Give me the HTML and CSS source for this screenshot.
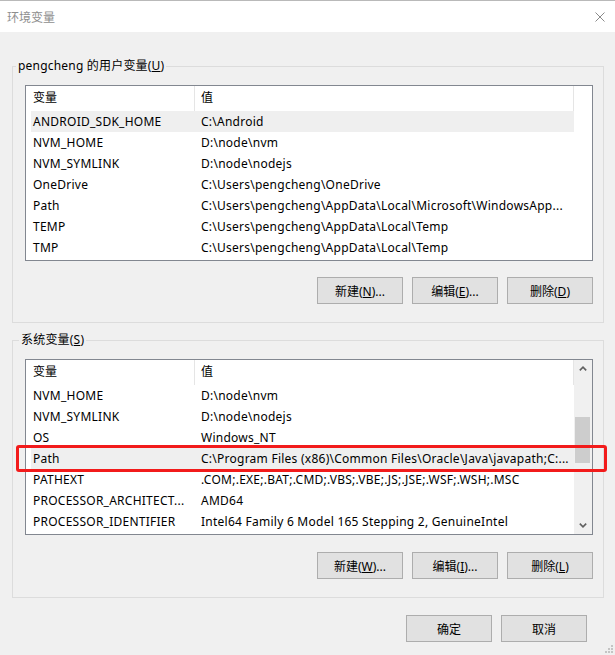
FILE: index.html
```html
<!DOCTYPE html>
<html lang="zh-CN">
<head>
    <meta charset="UTF-8">
    <title>环境变量</title>
    <link rel="stylesheet" href="styles.css">
</head>
<body>
    <div class="window">
        <div class="titlebar">
            <span class="title">环境变量</span>
            <svg class="close" width="10" height="10" viewBox="0 0 10 10">
                <path d="M0.5 0.5 L9.5 9.5 M9.5 0.5 L0.5 9.5" stroke="#8a8a8a" stroke-width="1" fill="none"/>
            </svg>
        </div>

        <fieldset class="group group-user">
            <legend>pengcheng 的用户变量(<u>U</u>)</legend>
            <div class="list">
                <div class="list-main">
                    <div class="list-head">
                        <div class="col-name">变量</div>
                        <div class="col-value">值</div>
                    </div>
                    <div class="row selected"><div class="col-name">ANDROID_SDK_HOME</div><div class="col-value">C:\Android</div></div>
                    <div class="row"><div class="col-name">NVM_HOME</div><div class="col-value">D:\node\nvm</div></div>
                    <div class="row"><div class="col-name">NVM_SYMLINK</div><div class="col-value">D:\node\nodejs</div></div>
                    <div class="row"><div class="col-name">OneDrive</div><div class="col-value">C:\Users\pengcheng\OneDrive</div></div>
                    <div class="row"><div class="col-name">Path</div><div class="col-value">C:\Users\pengcheng\AppData\Local\Microsoft\WindowsApp...</div></div>
                    <div class="row"><div class="col-name">TEMP</div><div class="col-value">C:\Users\pengcheng\AppData\Local\Temp</div></div>
                    <div class="row"><div class="col-name">TMP</div><div class="col-value">C:\Users\pengcheng\AppData\Local\Temp</div></div>
                </div>
                <div class="list-side"></div>
            </div>
            <div class="button-row">
                <button class="btn">新建(<u>N</u>)...</button>
                <button class="btn">编辑(<u>E</u>)...</button>
                <button class="btn">删除(<u>D</u>)</button>
            </div>
        </fieldset>

        <fieldset class="group group-system">
            <legend>系统变量(<u>S</u>)</legend>
            <div class="list">
                <div class="list-main">
                    <div class="list-head">
                        <div class="col-name">变量</div>
                        <div class="col-value">值</div>
                    </div>
                    <div class="row"><div class="col-name">NVM_HOME</div><div class="col-value">D:\node\nvm</div></div>
                    <div class="row"><div class="col-name">NVM_SYMLINK</div><div class="col-value">D:\node\nodejs</div></div>
                    <div class="row"><div class="col-name">OS</div><div class="col-value">Windows_NT</div></div>
                    <div class="row selected"><div class="col-name">Path</div><div class="col-value">C:\Program Files (x86)\Common Files\Oracle\Java\javapath;C:...</div></div>
                    <div class="row"><div class="col-name">PATHEXT</div><div class="col-value">.COM;.EXE;.BAT;.CMD;.VBS;.VBE;.JS;.JSE;.WSF;.WSH;.MSC</div></div>
                    <div class="row"><div class="col-name">PROCESSOR_ARCHITECT...</div><div class="col-value">AMD64</div></div>
                    <div class="row"><div class="col-name">PROCESSOR_IDENTIFIER</div><div class="col-value">Intel64 Family 6 Model 165 Stepping 2, GenuineIntel</div></div>
                </div>
                <div class="scrollbar">
                    <div class="scroll-arrow">
                        <svg width="8" height="5" viewBox="0 0 8 5"><path d="M0.8 4.4 L4 1.2 L7.2 4.4" stroke="#606060" stroke-width="1.6" fill="none"/></svg>
                    </div>
                    <div class="scroll-track">
                        <div class="scroll-thumb"></div>
                    </div>
                    <div class="scroll-arrow">
                        <svg width="8" height="5" viewBox="0 0 8 5"><path d="M0.8 0.6 L4 3.8 L7.2 0.6" stroke="#606060" stroke-width="1.6" fill="none"/></svg>
                    </div>
                </div>
            </div>
            <div class="button-row">
                <button class="btn">新建(<u>W</u>)...</button>
                <button class="btn">编辑(<u>I</u>)...</button>
                <button class="btn">删除(<u>L</u>)</button>
            </div>
        </fieldset>

        <div class="dialog-buttons">
            <button class="btn">确定</button>
            <button class="btn">取消</button>
        </div>

        <!-- 标注：选中的 Path 行 -->
        <div class="mark"></div>

        <svg class="grip" width="8" height="8" viewBox="0 0 8 8">
            <rect x="6" y="0" width="2" height="2" fill="#c4c4c4"/>
            <rect x="3" y="3" width="2" height="2" fill="#c4c4c4"/>
            <rect x="6" y="3" width="2" height="2" fill="#c4c4c4"/>
            <rect x="0" y="6" width="2" height="2" fill="#c4c4c4"/>
            <rect x="3" y="6" width="2" height="2" fill="#c4c4c4"/>
            <rect x="6" y="6" width="2" height="2" fill="#c4c4c4"/>
        </svg>
    </div>
</body>
</html>
```

FILE: styles.css
```css
* {
    box-sizing: border-box;
}
body {
    margin: 0;
    background: #f0f0f0;
    font-family: "Noto Sans", "Noto Sans CJK SC", sans-serif;
    font-size: 12px;
    color: #000;
}
.window {
    position: relative;
    width: 615px;
    height: 655px;
    overflow: hidden;
    background: #f0f0f0;
}
.titlebar {
    height: 32px;
    background: #fff;
    border-top: 1px solid #b9b9b9;
    display: flex;
    align-items: center;
    justify-content: space-between;
    padding: 0 10px 0 7px;
}
.title {
    color: #8e8e8e;
    font-size: 12px;
}

/* 分组框 */
.group {
    margin: 26px 11px 0 12px;
    padding: 11px 10px 18px 12px;
    border: 1px solid #dcdcdc;
    min-width: 0;
}
.group legend {
    padding: 0 2px;
    line-height: 16px;
    height: 16px;
    letter-spacing: 0.2px;
}
.group-user legend {
    margin-left: -9px;
}
.group-system {
    margin-top: 9px;
}
.group-system legend {
    margin-left: -6px;
}

/* 列表 */
.list {
    width: 568px;
    height: 176px;
    border: 1px solid #828790;
    background: #fff;
    display: flex;
}
.list-main {
    width: 548px;
}
.list-side {
    flex: 1;
}
.list-head {
    display: flex;
    height: 25px;
    line-height: 24px;
    border-right: 1px solid #e5e5e5;
}
.list-head .col-name {
    width: 169px;
    padding-left: 7px;
    border-right: 1px solid #e5e5e5;
}
.list-head .col-value {
    flex: 1;
    padding-left: 6px;
}
.row {
    display: flex;
    height: 21px;
    line-height: 21px;
    margin-left: 5px;
    white-space: nowrap;
    letter-spacing: 0.25px;
}
.row.selected {
    background: #efefef;
}
.row .col-name {
    width: 165px;
    padding-left: 2px;
    overflow: hidden;
}
.row .col-value {
    flex: 1;
    padding-left: 5px;
    overflow: hidden;
    text-overflow: ellipsis;
}

/* 滚动条 */
.scrollbar {
    flex: 1;
    background: #f0f0f0;
    display: flex;
    flex-direction: column;
}
.scroll-arrow {
    height: 17px;
    display: flex;
    align-items: center;
    justify-content: center;
}
.scroll-track {
    flex: 1;
    padding-top: 40px;
}
.scroll-thumb {
    width: 15px;
    height: 46px;
    margin-left: 1px;
    background: #cdcdcd;
}

/* 按钮 */
.button-row {
    display: flex;
    justify-content: flex-end;
    gap: 9px;
    margin-top: 16px;
}
.group-system .button-row {
    margin-top: 17px;
}
.btn {
    width: 86px;
    height: 27px;
    padding: 0;
    background: #e1e1e1;
    border: 1px solid #adadad;
    border-radius: 0;
    font-family: inherit;
    font-size: 12px;
    color: #000;
}
.dialog-buttons {
    display: flex;
    justify-content: flex-end;
    gap: 9px;
    margin-top: 17px;
    padding-right: 28px;
}

.mark {
    position: absolute;
    left: 16px;
    top: 445px;
    width: 591px;
    height: 27px;
    border: 3px solid #f21b1b;
    border-radius: 3px;
}
.grip {
    position: absolute;
    right: 2px;
    bottom: 2px;
}
```
